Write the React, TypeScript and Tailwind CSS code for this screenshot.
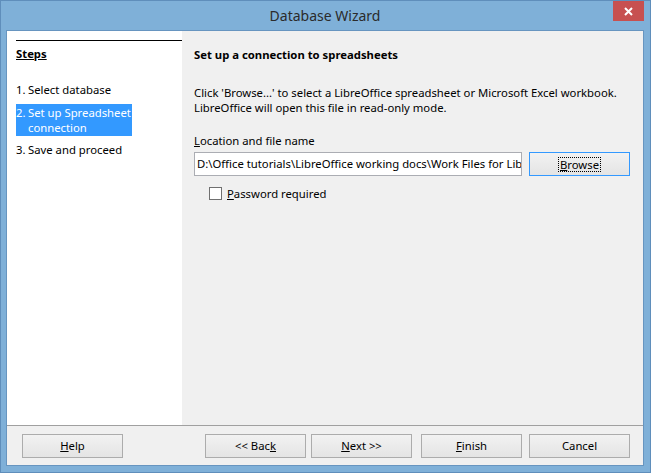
const font = { fontFamily: '"Noto Sans", "Open Sans", sans-serif' };

function Btn({ children, primary }: { children: React.ReactNode; primary?: boolean }) {
  return (
    <button
      className={
        "w-[101px] h-[24px] flex items-center justify-center text-[11.3px] text-black border bg-linear-to-b from-[#f2f2f2] to-[#e4e4e4] " +
        (primary ? "border-[#3399ff]" : "border-[#acacac]")
      }
    >
      {children}
    </button>
  );
}

function Step({ n, text, active }: { n: string; text: React.ReactNode; active?: boolean }) {
  return (
    <div
      className={
        "flex w-[116px] leading-[15px] whitespace-nowrap " +
        (active ? "bg-[#3399ff] text-white py-px" : "text-black")
      }
    >
      <span className="w-[12px] shrink-0">{n}</span>
      <span>{text}</span>
    </div>
  );
}

export default function App() {
  return (
    <div
      className="w-[651px] h-[473px] bg-[#7fb0d8] border border-[#5f8ebb] flex flex-col pl-[5px] pr-[6px] text-[11.3px]"
      style={font}
    >
      {/* title bar */}
      <div className="h-[29px] relative flex items-center justify-center shrink-0">
        <span className="text-[14px] text-[#2b2b2b]">Database Wizard</span>
        <div className="absolute right-[0px] top-0 w-[31px] h-[20px] bg-[#c75050] flex items-center justify-center">
          <svg width="9" height="9" viewBox="0 0 9 9">
            <path d="M1 1 L8 8 M8 1 L1 8" stroke="#fff" strokeWidth="2" />
          </svg>
        </div>
      </div>

      {/* client */}
      <div className="h-[436px] border border-[#6795c0] bg-[#f0f0f0] flex flex-col">
        <div className="flex h-[394px]">
          {/* steps */}
          <div className="w-[175px] bg-white pt-[9px] pl-[9px]">
            <div className="border-t border-black pt-[5px]">
              <div className="font-bold underline leading-[15px] text-black">Steps</div>
            </div>
            <div className="mt-[21px] flex flex-col">
              <Step n="1." text="Select database" />
              <div className="mt-[7px]">
                <Step
                  n="2."
                  active
                  text={
                    <>
                      Set up Spreadsheet
                      <br />
                      connection
                    </>
                  }
                />
              </div>
              <div className="mt-[6px]">
                <Step n="3." text="Save and proceed" />
              </div>
            </div>
          </div>

          {/* content */}
          <div className="flex-1 pl-[12px] pt-[16px] text-black">
            <div className="font-bold leading-[15px]">Set up a connection to spreadsheets</div>
            <p className="mt-[23px] leading-[15px] whitespace-nowrap">
              Click 'Browse...' to select a LibreOffice spreadsheet or Microsoft Excel workbook.
              <br />
              LibreOffice will open this file in read-only mode.
            </p>
            <div className="mt-[18px] leading-[15px]">
              <span className="underline">L</span>ocation and file name
            </div>
            <div className="mt-[4px] flex items-center">
              <div className="w-[328px] h-[24px] bg-white border border-[#abadb3] pl-[2px] flex items-center overflow-hidden whitespace-nowrap">
                D:\Office tutorials\LibreOffice working docs\Work Files for LibreOffice
              </div>
              <div className="ml-[7px]">
                <Btn primary>
                  <span className="border border-dotted border-black px-px leading-[13px]">
                    <span className="underline">B</span>rowse
                  </span>
                </Btn>
              </div>
            </div>
            <div className="mt-[10px] ml-[15px] flex items-center">
              <div className="w-[13px] h-[13px] bg-white border border-[#707070]" />
              <span className="ml-[5px] leading-[15px]">
                <span className="underline">P</span>assword required
              </span>
            </div>
          </div>
        </div>

        {/* bottom bar */}
        <div className="border-t border-[#a0a0a0] flex-1 flex items-start pt-[8px] pl-[15px]">
          <Btn>
            <span className="underline">H</span>elp
          </Btn>
          <div className="ml-[82px] flex">
            <Btn>
              &lt;&lt; Bac<span className="underline">k</span>
            </Btn>
            <div className="ml-[5px]">
              <Btn>
                <span className="underline">N</span>ext &gt;&gt;
              </Btn>
            </div>
            <div className="ml-[9px]">
              <Btn>
                <span className="underline">F</span>inish
              </Btn>
            </div>
            <div className="ml-[7px]">
              <Btn>Cancel</Btn>
            </div>
          </div>
        </div>
      </div>
    </div>
  );
}
